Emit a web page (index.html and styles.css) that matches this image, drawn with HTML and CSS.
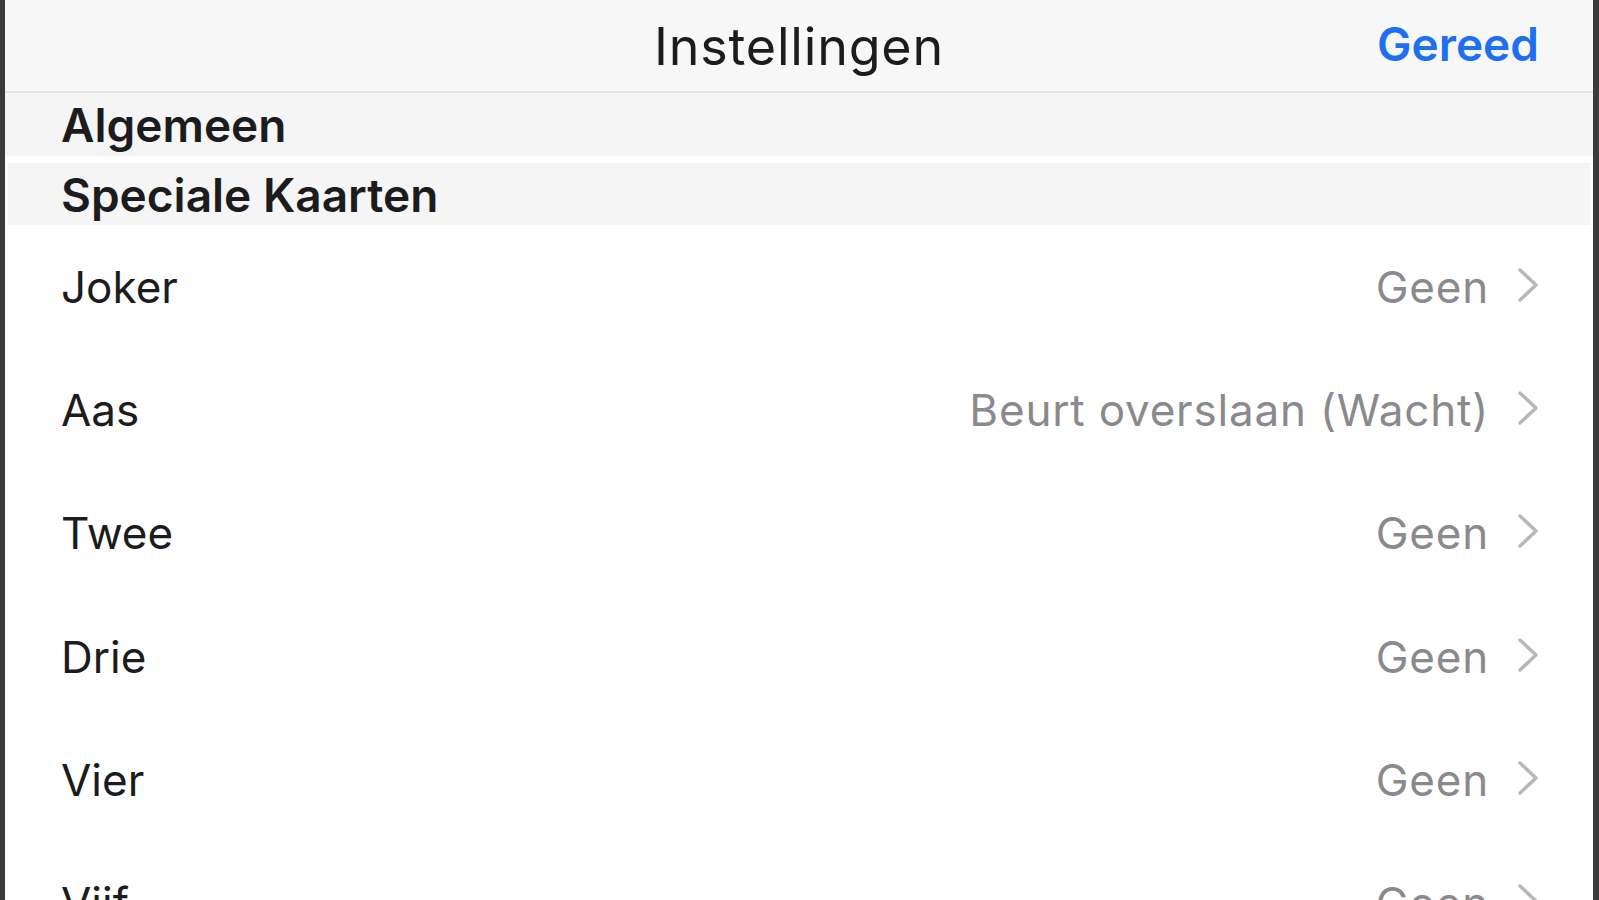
FILE: index.html
```html
<!DOCTYPE html>
<html lang="nl">
<head>
<meta charset="utf-8">
<title>Instellingen</title>
<link rel="stylesheet" href="styles.css">
</head>
<body>
<div class="frame">
  <header class="navbar">
    <span class="nav-spacer"></span>
    <h1 class="nav-title">Instellingen</h1>
    <span class="nav-done">Gereed</span>
  </header>
  <div class="section-header first">Algemeen</div>
  <div class="section-header second">Speciale Kaarten</div>
  <ul class="list">
    <li class="row"><span class="label">Joker</span><span class="value">Geen</span><svg class="chev" viewBox="0 0 22 36"><path d="M3 3 L19 18 L3 33"/></svg></li>
    <li class="row"><span class="label">Aas</span><span class="value">Beurt overslaan (Wacht)</span><svg class="chev" viewBox="0 0 22 36"><path d="M3 3 L19 18 L3 33"/></svg></li>
    <li class="row"><span class="label">Twee</span><span class="value">Geen</span><svg class="chev" viewBox="0 0 22 36"><path d="M3 3 L19 18 L3 33"/></svg></li>
    <li class="row"><span class="label">Drie</span><span class="value">Geen</span><svg class="chev" viewBox="0 0 22 36"><path d="M3 3 L19 18 L3 33"/></svg></li>
    <li class="row"><span class="label">Vier</span><span class="value">Geen</span><svg class="chev" viewBox="0 0 22 36"><path d="M3 3 L19 18 L3 33"/></svg></li>
    <li class="row"><span class="label">Vijf</span><span class="value">Geen</span><svg class="chev" viewBox="0 0 22 36"><path d="M3 3 L19 18 L3 33"/></svg></li>
  </ul>
</div>
</body>
</html>
```

FILE: styles.css
```css
html, body {
  margin: 0;
  padding: 0;
  height: 100%;
  overflow: hidden;
  background: #ffffff;
}

.frame {
  box-sizing: border-box;
  height: 900px;
  border-left: 5px solid #3a3a3a;
  border-right: 6px solid #3a3a3a;
  background: #ffffff;
  font-family: "Inter", "Liberation Sans", sans-serif;
  color: #1c1c1e;
  overflow: hidden;
}

.navbar {
  box-sizing: border-box;
  height: 93px;
  background: #f7f7f7;
  border-bottom: 2px solid #e4e4e4;
  display: grid;
  grid-template-columns: 1fr auto 1fr;
  align-items: center;
}

.nav-title {
  margin: 2px 0 0;
  font-size: 52px;
  font-weight: 400;
  letter-spacing: 0.8px;
  color: #1c1c1e;
  line-height: 1;
}

.nav-done {
  justify-self: end;
  font-size: 46px;
  font-weight: 600;
  color: #1f6ff2;
  line-height: 1;
  margin: -4px 54px 0 0;
}

.section-header {
  box-sizing: border-box;
  background: #f5f5f5;
  font-size: 46px;
  font-weight: 600;
  padding-left: 56px;
  display: flex;
  align-items: center;
  color: #1c1c1e;
}

.section-header.first {
  height: 63px;
}

.section-header.second {
  height: 62px;
  margin-top: 7px;
  margin-left: 3px;
  margin-right: 3px;
  padding-left: 53px;
  padding-top: 2px;
}

.list {
  list-style: none;
  margin: 0;
  padding: 0;
}

.row {
  box-sizing: border-box;
  height: 123.3px;
  display: flex;
  align-items: center;
  padding: 0 54px 0 56px;
  font-size: 44px;
}

.label {
  flex: 1;
  color: #1c1c1e;
}

.value {
  color: #8a8a8e;
  letter-spacing: 0.8px;
}

.chev {
  width: 22px;
  height: 36px;
  margin-left: 28px;
  margin-top: -4px;
  fill: none;
  stroke: #b8b8bc;
  stroke-width: 3.5;
  stroke-linecap: round;
  stroke-linejoin: round;
}
```
